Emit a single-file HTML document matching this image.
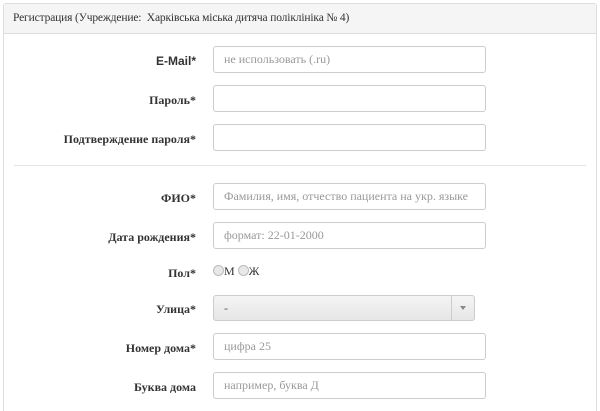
<!DOCTYPE html>
<html><head><meta charset="utf-8"><style>
html,body{margin:0;background:#fff;width:600px;height:411px;overflow:hidden;font-family:"Liberation Serif",serif;}
.panel{position:absolute;left:3px;top:3px;width:594px;height:408px;border:1px solid #ddd;border-bottom:none;border-radius:3px 3px 0 0;box-sizing:border-box;}
.hd{height:30px;background:#f5f5f5;border-bottom:1px solid #ddd;font-size:11.5px;letter-spacing:-0.15px;color:#333;line-height:29px;padding-left:9px;box-sizing:border-box;}
.lb{position:absolute;right:404px;font-size:12px;font-weight:bold;color:#333;text-align:right;white-space:nowrap;}
.in{position:absolute;left:213px;border:1px solid #ccc;border-radius:3px;font-size:12px;color:#999;line-height:25px;padding-left:10px;box-sizing:border-box;width:273px;height:27px;}
.hr{position:absolute;left:14px;width:572px;top:165px;border-top:1px solid #e5e5e5;}
.sel{position:absolute;left:213px;top:295px;width:262px;height:26px;border:1px solid #ccc;border-radius:3px;box-sizing:border-box;background:linear-gradient(#f4f4f4,#e6e6e6);font-size:12px;color:#555;line-height:24px;padding-left:10px;}
.sel .ar{position:absolute;right:0;top:0;width:22px;height:24px;border-left:1px solid #ccc;}
.sel .ar:after{content:"";position:absolute;left:8px;top:10px;border:3px solid transparent;border-top:4px solid #888;}
.rad{display:inline-block;width:9px;height:9px;border-radius:50%;border:1px solid #bbb;background:#e8e8e8;vertical-align:-1px;}
</style></head><body>
<div class="panel"><div class="hd">Регистрация (Учреждение:&nbsp; Харківська міська дитяча поліклініка № 4)</div></div>
<div class="lb" style="top:54px;font-family:'Liberation Sans',sans-serif">E-Mail*</div>
<div class="in" style="top:46px">не использовать (.ru)</div>
<div class="lb" style="top:93px">Пароль*</div>
<div class="in" style="top:85px"></div>
<div class="lb" style="top:132px">Подтверждение пароля*</div>
<div class="in" style="top:124px"></div>
<div class="hr"></div>
<div class="lb" style="top:191px">ФИО*</div>
<div class="in" style="top:183px">Фамилия, имя, отчество пациента на укр. языке</div>
<div class="lb" style="top:230px">Дата рождения*</div>
<div class="in" style="top:222px">формат: 22-01-2000</div>
<div class="lb" style="top:266px">Пол*</div>
<div style="position:absolute;left:213px;top:264px;font-size:12px;color:#333"><span class="rad"></span>М <span class="rad"></span>Ж</div>
<div class="lb" style="top:302px">Улица*</div>
<div class="sel">-<span class="ar"></span></div>
<div class="lb" style="top:341px">Номер дома*</div>
<div class="in" style="top:333px">цифра 25</div>
<div class="lb" style="top:380px">Буква дома</div>
<div class="in" style="top:372px">например, буква Д</div>
</body></html>
